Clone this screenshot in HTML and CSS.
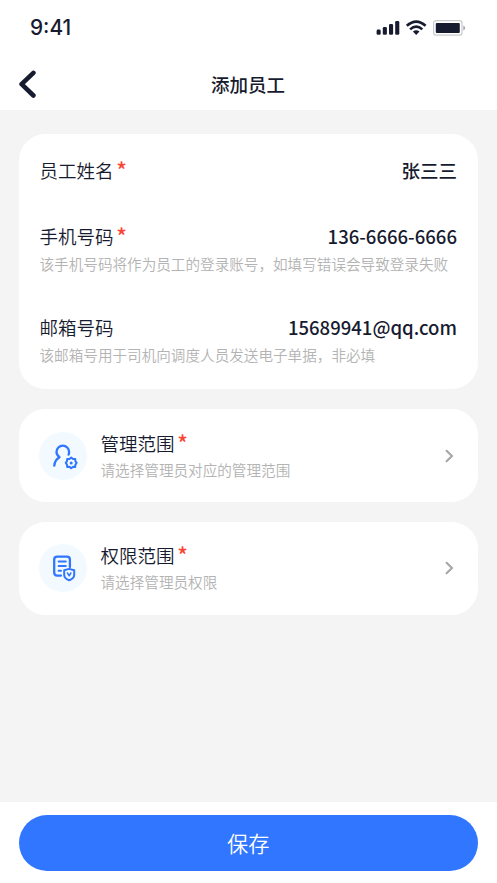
FILE: index.html
```
<!DOCTYPE html>
<html lang="zh-CN">
<head>
<meta charset="utf-8">
<title>添加员工</title>
<link rel="stylesheet" href="styles.css">
</head>
<body>
<div class="page">
  <header class="header">
    <div class="status">
      <span class="time">9:41</span>
      <svg class="signals" width="90" height="16" viewBox="0 0 90 16">
        <g fill="#171b30">
          <rect x="0.6" y="9.6" width="4.1" height="5.2" rx="1.3"/>
          <rect x="6.8" y="7" width="4.1" height="7.8" rx="1.3"/>
          <rect x="13" y="4" width="4.1" height="10.8" rx="1.3"/>
          <rect x="19.2" y="1" width="4.1" height="13.8" rx="1.3"/>
        </g>
        <g fill="none" stroke="#171b30" stroke-width="2.6">
          <path d="M30.8 5.8Q40.2-2.6 49.6 5.8"/>
          <path d="M34.1 9.4Q40.2 4 46.3 9.4"/>
        </g>
        <path d="M36.9 11.5Q40.2 8.9 43.5 11.5L40.2 14.9Z" fill="#171b30"/>
        <rect x="57.6" y="0.7" width="28.4" height="14.5" rx="2.4" fill="none" stroke="#c9cacf" stroke-width="1.2"/>
        <rect x="59.8" y="3" width="24" height="9.9" rx="1" fill="#171b30"/>
        <path d="M87.3 5.6Q89.2 6.2 89.2 8T87.3 10.4Z" fill="#a9aab0"/>
      </svg>
    </div>
    <div class="nav">
      <svg class="back" width="18" height="28" viewBox="0 0 18 28"><path d="M15.4 2.9L3.6 14.2L15.4 25.5" fill="none" stroke="#171b30" stroke-width="4.6" stroke-linecap="round" stroke-linejoin="round"/></svg>
      <h1 class="title">添加员工</h1>
    </div>
  </header>

  <main class="content">
    <section class="card form">
      <div class="field">
        <div class="row"><span class="label">员工姓名<i class="req">*</i></span><span class="value">张三三</span></div>
      </div>
      <div class="field">
        <div class="row"><span class="label">手机号码<i class="req">*</i></span><span class="value">136-6666-6666</span></div>
        <p class="hint">该手机号码将作为员工的登录账号，如填写错误会导致登录失败</p>
      </div>
      <div class="field">
        <div class="row"><span class="label">邮箱号码</span><span class="value">15689941@qq.com</span></div>
        <p class="hint">该邮箱号用于司机向调度人员发送电子单据，非必填</p>
      </div>
    </section>

    <section class="card link">
      <div class="badge">
        <svg width="32" height="32" viewBox="0 0 32 32" fill="none" stroke="#3076ff" stroke-width="2.3" stroke-linecap="round" stroke-linejoin="round">
          <path d="M7.3 25.6C7.6 22 9.4 19 12.5 17.2C10.6 15.8 9.5 14.1 9.5 12A6.3 6.3 0 0 1 22.1 12Q22.1 13.4 21.6 14.6"/>
          <path stroke-width="2" d="M24.2 17.6L26 19.1L28.2 18.9L28.4 21.1L29.6 22.9L28.4 24.7L28.2 26.9L26 26.7L24.2 28.2L22.4 26.7L20.2 26.9L20 24.7L18.8 22.9L20 21.1L20.2 18.9L22.4 19.1Z"/>
          <circle cx="24.2" cy="22.9" r="1.5" fill="#3076ff" stroke="none"/>
        </svg>
      </div>
      <div class="text">
        <div class="label">管理范围<i class="req">*</i></div>
        <p class="hint">请选择管理员对应的管理范围</p>
      </div>
      <svg class="chevron" width="10" height="14" viewBox="0 0 10 14"><path d="M1.6 1.8L6.9 7L1.6 12.2" fill="none" stroke="#a8a8a8" stroke-width="2.2" stroke-linecap="round"/></svg>
    </section>

    <section class="card link">
      <div class="badge">
        <svg width="32" height="32" viewBox="0 0 32 32" fill="none" stroke="#3076ff" stroke-width="2.3" stroke-linecap="round" stroke-linejoin="round">
          <path d="M14 23.6H10.2Q7.2 23.6 7.2 20.6V7.6Q7.2 4.6 10.2 4.6H19.9Q22.9 4.6 22.9 7.6V15"/>
          <path stroke-width="2" d="M11.6 9.6H18.8M11.6 14.1H18.8M11.6 18.8H14"/>
          <path stroke-width="2" d="M22.2 16.9L27.2 18.2V23Q27.2 26.4 22.2 28.3Q17.2 26.4 17.2 23V18.2Z"/>
          <path stroke-width="1.5" d="M20.5 21L22.2 23.8L23.9 21"/>
        </svg>
      </div>
      <div class="text">
        <div class="label">权限范围<i class="req">*</i></div>
        <p class="hint">请选择管理员权限</p>
      </div>
      <svg class="chevron" width="10" height="14" viewBox="0 0 10 14"><path d="M1.6 1.8L6.9 7L1.6 12.2" fill="none" stroke="#a8a8a8" stroke-width="2.2" stroke-linecap="round"/></svg>
    </section>
  </main>

  <footer class="footer"><button class="save">保存</button></footer>
</div>
</body>
</html>
```
FILE: styles.css
```
* { box-sizing: border-box; margin: 0; padding: 0; }

body {
  font-family: "Noto Sans CJK SC", sans-serif;
  color: #171b30;
  background: #f4f4f4;
}

.page { height: 883px; display: flex; flex-direction: column; overflow: hidden; }

.header { height: 110px; background: #fff; flex: none; }

.status {
  height: 56px;
  padding: 0 31px 0 30px;
  display: flex;
  align-items: center;
  justify-content: space-between;
}

.time { font: 550 20.8px/24px Inter, sans-serif; }

.nav {
  height: 54px;
  padding: 2px 19px 0 18px;
  display: grid;
  grid-template-columns: 18px 1fr 18px;
  align-items: center;
}

.title { font-size: 18.55px; font-weight: 500; line-height: 28px; text-align: center; }

.content {
  flex: 1;
  padding: 24px 19.5px 0 19px;
  display: flex;
  flex-direction: column;
  gap: 20px;
}

.card { background: #fff; border-radius: 26.5px; }

.form { height: 255px; padding: 22px 20.5px 0; }

.field + .field { margin-top: 38px; }

.row { display: flex; align-items: center; justify-content: space-between; height: 28px; }

.label {
  display: flex;
  font-size: 18.55px;
  font-weight: 350;
  line-height: 28px;
}

.req {
  margin-left: 2.5px;
  font-size: 22px;
  font-style: normal;
  font-weight: 500;
  line-height: 26px;
  color: #fa4637;
}

.value { font-size: 18.55px; font-weight: 500; line-height: 28px; }

.hint {
  font-size: 14.6px;
  font-weight: 350;
  line-height: 22px;
  color: #b3b3b3;
  white-space: nowrap;
}

.form .hint { margin-top: 3px; }

.link {
  height: 92.8px;
  padding: 0.4px 23px 0 20px;
  display: flex;
  align-items: center;
}

.badge {
  width: 48px;
  height: 48px;
  border-radius: 50%;
  background: #f3faff;
  display: grid;
  place-items: center;
}

.text { flex: 1; margin-left: 13.5px; }
.text .label { margin-top: -2px; }
.text .hint { margin-top: 2px; }

.footer { height: 81px; padding: 13px 19.5px 0 19px; background: #fff; flex: none; }

.save {
  display: block;
  width: 100%;
  height: 56px;
  border: 0;
  border-radius: 28px;
  background: #3076ff;
  color: #fff;
  font: 350 21.2px/56px "Noto Sans CJK SC", sans-serif;
}
```
